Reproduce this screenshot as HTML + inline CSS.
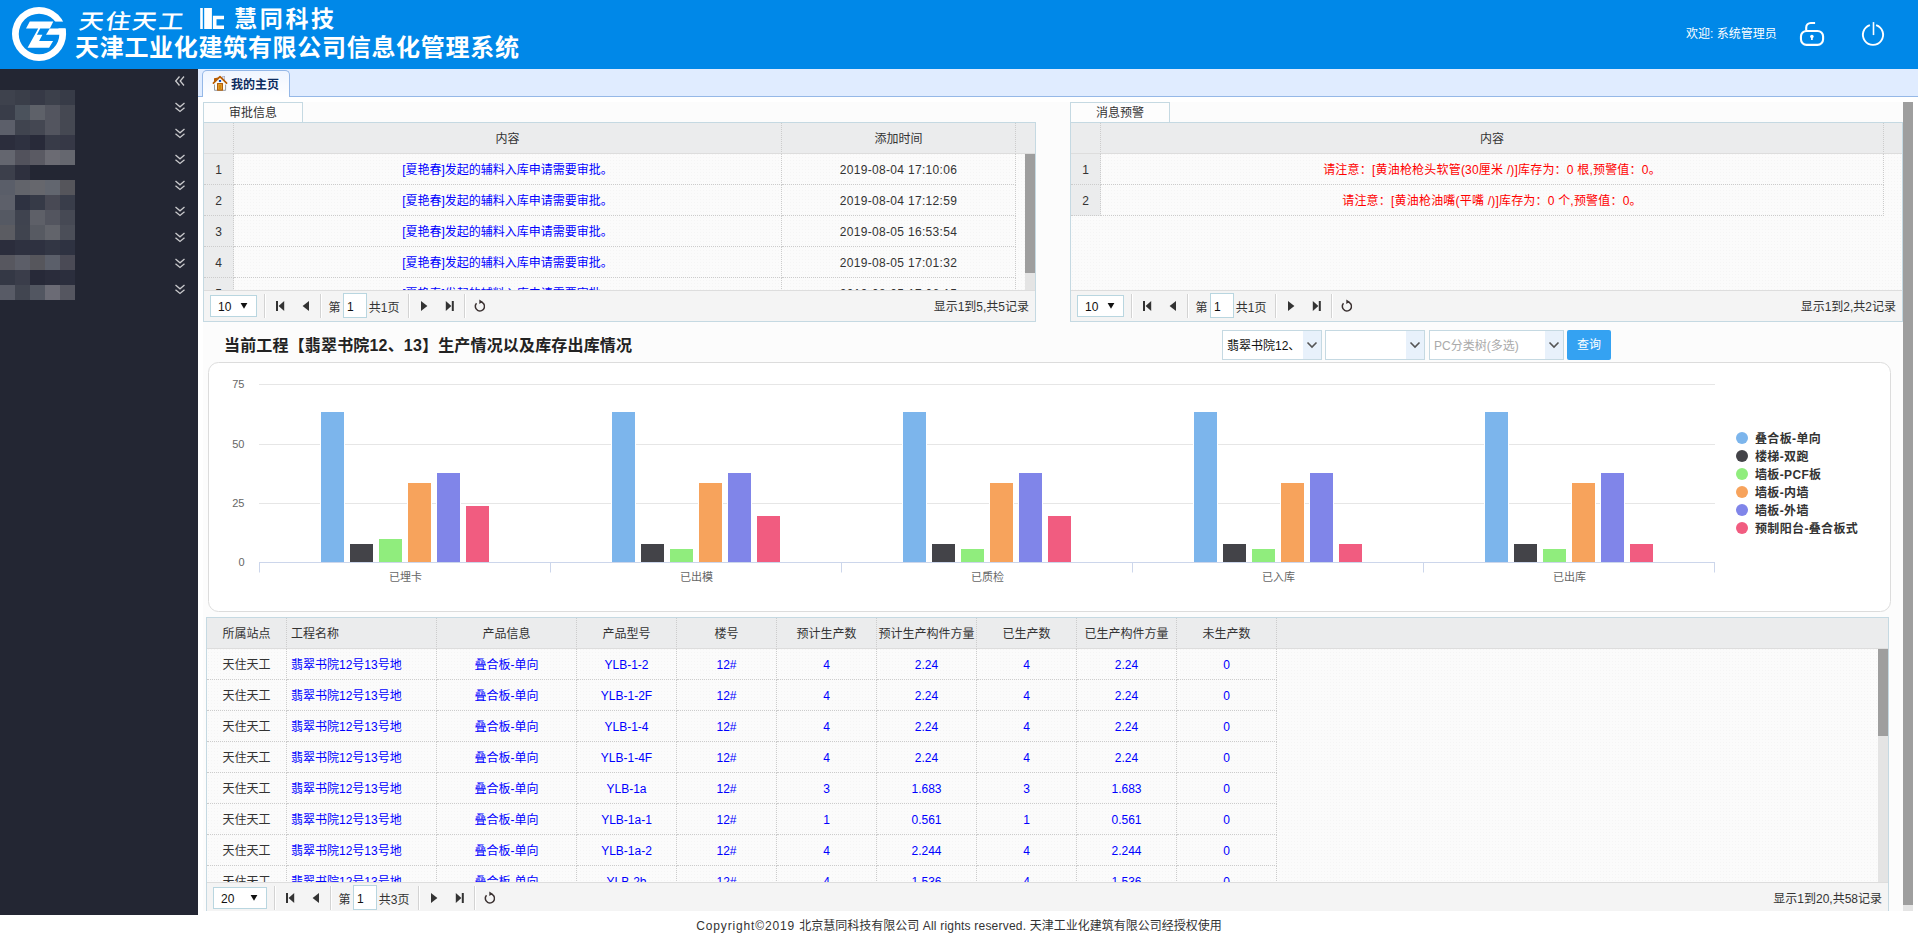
<!DOCTYPE html>
<html lang="zh-CN"><head><meta charset="utf-8"><title>天津工业化建筑有限公司信息化管理系统</title>
<style>
html,body{margin:0;padding:0}
body{width:1918px;height:935px;overflow:hidden;background:#fff;font:12px/1.2 "Liberation Sans","Noto Sans CJK SC",sans-serif;color:#333;position:relative}
#hdr{position:absolute;left:0;top:0;width:1918px;height:69px;background:#0088e8;color:#fff}
#t1{position:absolute;left:79px;top:3.5px;font-size:25px;font-weight:500;letter-spacing:1.6px;white-space:nowrap;transform-origin:0 50%;transform:scaleY(.85) skewX(-7deg);line-height:34px}
#t2{position:absolute;left:234px;top:2px;font-size:23px;font-weight:bold;letter-spacing:2.7px;white-space:nowrap;line-height:34px}
#t3{position:absolute;left:75px;top:30.5px;font-size:24px;font-weight:bold;letter-spacing:.7px;white-space:nowrap;line-height:34px}
#wel{position:absolute;left:1686px;top:26px;font-size:12px;white-space:nowrap;line-height:16px}
#side{position:absolute;left:0;top:69px;width:198px;height:846px;background:#232633}
#tabs{position:absolute;left:198px;top:69px;width:1720px;height:27px;background:#e0ecff;border-bottom:1px solid #95b8e7}
#tab{position:absolute;left:4px;top:1px;width:86px;height:26px;border:1px solid #95b8e7;border-bottom:0;border-radius:5px 5px 0 0;background:linear-gradient(#eff5ff,#fff);color:#0e2d5f;font-weight:bold}
#tab span{position:absolute;left:28px;top:6.5px;white-space:nowrap}
#content{position:absolute;left:198px;top:102px;width:1705px;height:809px;background:#fcfcfc;overflow:hidden}
#vsb{position:absolute;left:1903px;top:102px;width:10px;height:809px;background:#e4e4e4}
#vsb div{width:10px;height:803px;background:#9e9e9e}
.ptitle{position:absolute;height:19px;width:98px;border:1px solid #c5d9e2;border-bottom:0;background:#fdfdfd;text-align:center;line-height:20px;color:#333}
.panel{position:absolute;border:1px solid #c5d9e2;background:#fbfbfb radial-gradient(circle,#f5f5f5 .7px,rgba(245,245,245,0) 1px) 0 0/3px 3px;overflow:hidden}
table.dg{border-collapse:separate;border-spacing:0;table-layout:fixed;position:absolute;left:0;top:0}
table.dg th,table.dg td{padding:2px 0 0;border-right:1px dotted #ccc;border-bottom:1px dotted #ccc;text-align:center;font-weight:normal;white-space:nowrap;overflow:hidden;box-sizing:border-box;height:31px}
table.dg th{background:#ebeced;color:#333;border-bottom:1px solid #ddd}
table.dg td{color:#0000ff}
table.dg td.rn{background:#ebeced;color:#333}
table.dg td.k{color:#333}
table.dg td.dt{color:#333;letter-spacing:.32px}
table.dg td.red{color:#ff0000;letter-spacing:.2px}
.hdbg{position:absolute;left:0;top:0;height:30px;background:#ebeced;border-bottom:1px solid #ddd}
.pager{position:absolute;left:0;height:30px;border-top:1px solid #ddd;background:#f4f4f4}
.psel{position:absolute;left:6px;top:4px;height:20px;border:1px solid #b9d6e0;background:#fff;line-height:23px;padding-left:7px;box-sizing:content-box;color:#111}
.psel .arr{position:absolute;right:8px;top:7px}
.pt{position:absolute;top:9.5px;color:#333;white-space:nowrap}
.pin{position:absolute;top:2px;width:19px;height:23px;border:1px solid #b9d6e0;background:#fff;line-height:26px;padding-left:3px;color:#111}
.pinfo{position:absolute;right:6px;top:8.5px;color:#333;white-space:nowrap}
.isb{position:absolute;width:10px;background:#e4e4e4}
.isb div{width:10px;background:#9e9e9e}
.combo{position:absolute;top:228px;height:30px;border:1px solid #c5d9e2;background:#fff;box-sizing:border-box;line-height:30px;padding-left:4px;color:#111}
.combo .ar{position:absolute;right:0;top:0;width:18px;height:28px;background:#e8f1fb}
.combo .ar svg{position:absolute;left:3px;top:9px}
#qbtn{position:absolute;left:1369px;top:228px;width:44px;height:30px;background:#34a2f2;color:#fff;text-align:center;line-height:31px;border-radius:2px}
#ctitle{position:absolute;left:26px;top:233.5px;letter-spacing:.17px;font-size:16px;font-weight:bold;color:#222;white-space:nowrap}
#foot{position:absolute;left:0;top:918.5px;width:1918px;text-align:center;color:#333;font-size:12px}
</style></head><body>
<div id="hdr">
<svg width="80" height="69" style="position:absolute;left:0;top:0" viewBox="0 0 80 69">
<path fill="#fff" fill-rule="evenodd" d="M39.05 6.9a27.05 27.05 0 1 0 0 54.1a27.05 27.05 0 1 0 0-54.1zM39.05 13.65a20.3 20.3 0 1 1 0 40.6a20.3 20.3 0 1 1 0-40.6z"/>
<rect x="50" y="21.6" width="18" height="6.8" fill="#0088e8"/>
<path fill="#fff" d="M49.8 28.4H65.5L66.1 34.7H46z"/>
<path fill="#fff" d="M29.8 21.6H53.3L49.8 28.4H40.2L36.9 34.7H42.4L39.1 40.9H53.1L49.1 47.8H27.6L38.2 28.4H26z"/>
</svg>
<div id="t1">天住天工</div>
<svg width="26" height="22" style="position:absolute;left:200px;top:7px" viewBox="0 0 26 22"><path fill="#fff" d="M0.2 0.9h2.6v21.1H0.2zM4.2 0.9h7.7v21.1H4.2zM12.9 8.8h11.1v3.5h-7.5v6.1h7.5v3.6H12.9z"/></svg>
<div id="t2">慧同科技</div>
<div id="t3">天津工业化建筑有限公司信息化管理系统</div>
<div id="wel">欢迎: 系统管理员</div>
<svg width="110" height="44" style="position:absolute;left:1790px;top:12px" viewBox="1790 12 110 44" fill="none" stroke="#fff"><rect x="1800.95" y="30.95" width="22.15" height="13.95" rx="5.6" stroke-width="2.1"/><path d="M1806.2 30.5V27.6a4.6 4.6 0 0 1 4.6-4.6H1815.1" stroke-width="2.1"/><circle cx="1811.9" cy="36.6" r="1.75" fill="#fff" stroke="none"/><path d="M1811.9 37v2.9" stroke-width="1.7"/><path d="M1869.9 25.15A10.1 10.1 0 1 0 1876.1 25.15" stroke-width="1.9"/><path d="M1873.5 22.1V35.1" stroke-width="1.6"/></svg>
</div>
<div id="side">
<svg width="198" height="846" style="position:absolute;left:0;top:0">
<rect x="0" y="21" width="15" height="15" fill="#3E424D"/>
<rect x="15" y="21" width="15" height="15" fill="#3A3E49"/>
<rect x="30" y="21" width="15" height="15" fill="#363946"/>
<rect x="45" y="21" width="15" height="15" fill="#3C404B"/>
<rect x="60" y="21" width="15" height="15" fill="#373B47"/>
<rect x="0" y="36" width="15" height="15" fill="#393D49"/>
<rect x="15" y="36" width="15" height="15" fill="#4B525C"/>
<rect x="30" y="36" width="15" height="15" fill="#5E6169"/>
<rect x="45" y="36" width="15" height="15" fill="#53555F"/>
<rect x="60" y="36" width="15" height="15" fill="#454852"/>
<rect x="0" y="51" width="15" height="15" fill="#5C5F6A"/>
<rect x="15" y="51" width="15" height="15" fill="#40444F"/>
<rect x="30" y="51" width="15" height="15" fill="#444752"/>
<rect x="45" y="51" width="15" height="15" fill="#53555F"/>
<rect x="60" y="51" width="15" height="15" fill="#454852"/>
<rect x="0" y="66" width="15" height="15" fill="#2B2D3C"/>
<rect x="15" y="66" width="15" height="15" fill="#2E3140"/>
<rect x="30" y="66" width="15" height="15" fill="#282A39"/>
<rect x="45" y="66" width="15" height="15" fill="#383B48"/>
<rect x="60" y="66" width="15" height="15" fill="#363846"/>
<rect x="0" y="81" width="15" height="15" fill="#64666F"/>
<rect x="15" y="81" width="15" height="15" fill="#52525C"/>
<rect x="30" y="81" width="15" height="15" fill="#5A5A63"/>
<rect x="45" y="81" width="15" height="15" fill="#6B6B73"/>
<rect x="60" y="81" width="15" height="15" fill="#65676F"/>
<rect x="0" y="96" width="15" height="15" fill="#3C3F4B"/>
<rect x="15" y="96" width="15" height="15" fill="#2E303E"/>
<rect x="0" y="111" width="15" height="15" fill="#5A5E69"/>
<rect x="15" y="111" width="15" height="15" fill="#62646B"/>
<rect x="30" y="111" width="15" height="15" fill="#66676D"/>
<rect x="45" y="111" width="15" height="15" fill="#62666F"/>
<rect x="60" y="111" width="15" height="15" fill="#55555B"/>
<rect x="0" y="126" width="15" height="15" fill="#5D606A"/>
<rect x="15" y="126" width="15" height="15" fill="#2E3241"/>
<rect x="30" y="126" width="15" height="15" fill="#363A47"/>
<rect x="45" y="126" width="15" height="15" fill="#484954"/>
<rect x="60" y="126" width="15" height="15" fill="#393D4A"/>
<rect x="0" y="141" width="15" height="15" fill="#555963"/>
<rect x="15" y="141" width="15" height="15" fill="#3F434F"/>
<rect x="30" y="141" width="15" height="15" fill="#5E6068"/>
<rect x="45" y="141" width="15" height="15" fill="#53555F"/>
<rect x="60" y="141" width="15" height="15" fill="#464954"/>
<rect x="0" y="156" width="15" height="15" fill="#5B5C62"/>
<rect x="15" y="156" width="15" height="15" fill="#40444F"/>
<rect x="30" y="156" width="15" height="15" fill="#575A62"/>
<rect x="45" y="156" width="15" height="15" fill="#62646B"/>
<rect x="60" y="156" width="15" height="15" fill="#4B4E58"/>
<rect x="0" y="171" width="15" height="15" fill="#2B2D3C"/>
<rect x="15" y="171" width="15" height="15" fill="#2E3140"/>
<rect x="30" y="171" width="15" height="15" fill="#2E3140"/>
<rect x="45" y="171" width="15" height="15" fill="#323644"/>
<rect x="60" y="171" width="15" height="15" fill="#2E3241"/>
<rect x="0" y="186" width="15" height="15" fill="#57575F"/>
<rect x="15" y="186" width="15" height="15" fill="#5C5E68"/>
<rect x="30" y="186" width="15" height="15" fill="#56565C"/>
<rect x="45" y="186" width="15" height="15" fill="#5B5F6A"/>
<rect x="60" y="186" width="15" height="15" fill="#4A4A55"/>
<rect x="0" y="201" width="15" height="15" fill="#343845"/>
<rect x="15" y="201" width="15" height="15" fill="#3A3D4A"/>
<rect x="30" y="201" width="15" height="15" fill="#272938"/>
<rect x="45" y="201" width="15" height="15" fill="#2A2C3B"/>
<rect x="60" y="201" width="15" height="15" fill="#2B2E3D"/>
<rect x="0" y="216" width="15" height="15" fill="#585B66"/>
<rect x="15" y="216" width="15" height="15" fill="#414550"/>
<rect x="30" y="216" width="15" height="15" fill="#525661"/>
<rect x="45" y="216" width="15" height="15" fill="#6B6B75"/>
<rect x="60" y="216" width="15" height="15" fill="#555660"/>
<g fill="none" stroke="#c9c9cc" stroke-width="1.3">
<path d="M179.5 7.5 L175.7 12 L179.5 16.5 M184 7.5 L180.2 12 L184 16.5"/>
<path d="M175.5 34 L180 37.8 L184.5 34 M175.5 38.7 L180 42.5 L184.5 38.7"/>
<path d="M175.5 60 L180 63.8 L184.5 60 M175.5 64.7 L180 68.5 L184.5 64.7"/>
<path d="M175.5 86 L180 89.8 L184.5 86 M175.5 90.7 L180 94.5 L184.5 90.7"/>
<path d="M175.5 112 L180 115.8 L184.5 112 M175.5 116.7 L180 120.5 L184.5 116.7"/>
<path d="M175.5 138 L180 141.8 L184.5 138 M175.5 142.7 L180 146.5 L184.5 142.7"/>
<path d="M175.5 164 L180 167.8 L184.5 164 M175.5 168.7 L180 172.5 L184.5 168.7"/>
<path d="M175.5 190 L180 193.8 L184.5 190 M175.5 194.7 L180 198.5 L184.5 194.7"/>
<path d="M175.5 216 L180 219.8 L184.5 216 M175.5 220.7 L180 224.5 L184.5 220.7"/>
</g></svg></div>
<div id="tabs"><div id="tab">
<svg width="24" height="22" viewBox="208 72 24 22" style="position:absolute;left:5px;top:1px"><rect x="222.7" y="76.3" width="2" height="3.4" fill="#dfe2ee" stroke="#9aa0bb" stroke-width=".6"/><path d="M214.5 83L220 77.4L225.6 83V90.3H214.5z" fill="#fbfbf6"/><path d="M214.5 84.5V90.3H225.6V84.5" fill="none" stroke="#8a8f96" stroke-width=".9"/><path d="M214 78.2L218.4 77.4L214 82.3z" fill="#b85c00"/><path d="M213.4 83.2L220 76.7L226.6 83.2" fill="none" stroke="#b85c00" stroke-width="1.7" stroke-linecap="round" stroke-linejoin="round"/><rect x="217.6" y="83.6" width="4.8" height="6.5" fill="#eaa33a" stroke="#b05a00" stroke-width="1.1"/><rect x="219.1" y="85" width="1.8" height="4.4" fill="#d08a00"/><rect x="218.9" y="80" width="2.2" height="1.9" fill="#0a44c4"/></svg>
<span>我的主页</span></div></div>
<div id="content">
<div style="position:absolute;left:0;top:0;width:5px;height:809px;background:#fff"></div>
<!-- left panel -->
<div class="ptitle" style="left:5px;top:0">审批信息</div>
<div class="panel" style="left:5px;top:20px;width:831px;height:198px">
<div class="hdbg" style="width:831px"></div>
<table class="dg"><colgroup><col style="width:30px"><col style="width:548px"><col style="width:234px"></colgroup>
<tr class="hd"><th></th><th>内容</th><th>添加时间</th></tr>
<tr><td class="rn">1</td><td>[夏艳春]发起的辅料入库申请需要审批。</td><td class="dt">2019-08-04 17:10:06</td></tr>
<tr><td class="rn">2</td><td>[夏艳春]发起的辅料入库申请需要审批。</td><td class="dt">2019-08-04 17:12:59</td></tr>
<tr><td class="rn">3</td><td>[夏艳春]发起的辅料入库申请需要审批。</td><td class="dt">2019-08-05 16:53:54</td></tr>
<tr><td class="rn">4</td><td>[夏艳春]发起的辅料入库申请需要审批。</td><td class="dt">2019-08-05 17:01:32</td></tr>
<tr><td class="rn">5</td><td>[夏艳春]发起的辅料入库申请需要审批。</td><td class="dt">2019-08-05 17:06:15</td></tr>
</table>
<div class="isb" style="left:821px;top:31px;height:136px"><div style="height:119px"></div></div>
<div class="pager" style="top:167px;width:831px">
<div class="psel" style="width:38px">10<svg class="arr" width="8" height="6" viewBox="0 0 8 6"><path d="M0.6 0h6.8L4 5.8z" fill="#111"/></svg></div>
<svg width="300" height="30" style="position:absolute;left:0;top:0" fill="#333"><path d="M60.5 3V27" stroke="#d3d3d3"/><path d="M61.5 3V27" stroke="#fff"/><path d="M116.5 3V27" stroke="#d3d3d3"/><path d="M117.5 3V27" stroke="#fff"/><path d="M204.5 3V27" stroke="#d3d3d3"/><path d="M205.5 3V27" stroke="#fff"/><path d="M260.5 3V27" stroke="#d3d3d3"/><path d="M261.5 3V27" stroke="#fff"/><path d="M72 10h2v10h-2zM74.6 15l5.6-5v10z"/><path d="M98.6 15l6.4-5v10z"/><path d="M223.4 15l-6.4-5v10z"/><path d="M247.4 15l-5.6-5v10zM247.8 10h2v10h-2z"/><path d="M276.2 10.8A4.6 4.6 0 1 1 272.5 12.3" fill="none" stroke="#3a3030" stroke-width="1.5"/><path d="M275.29999999999995 8.5l3.4 2.2-3.4 2.3z" fill="#3a3030"/></svg>
<span class="pt" style="left:124.5px">第</span><div class="pin" style="left:139px">1</div><span class="pt" style="left:164.8px">共1页</span>
<span class="pinfo">显示1到5,共5记录</span>
</div>
</div>
<!-- right panel -->
<div class="ptitle" style="left:872px;top:0">消息预警</div>
<div class="panel" style="left:872px;top:20px;width:831px;height:198px">
<div class="hdbg" style="width:831px"></div>
<table class="dg"><colgroup><col style="width:30px"><col style="width:783px"></colgroup>
<tr class="hd"><th></th><th>内容</th></tr>
<tr><td class="rn">1</td><td class="red">请注意：[黄油枪枪头软管(30厘米 /)]库存为：0 根,预警值：0。</td></tr>
<tr><td class="rn">2</td><td class="red">请注意：[黄油枪油嘴(平嘴 /)]库存为：0 个,预警值：0。</td></tr>
</table>
<div class="pager" style="top:167px;width:831px">
<div class="psel" style="width:38px">10<svg class="arr" width="8" height="6" viewBox="0 0 8 6"><path d="M0.6 0h6.8L4 5.8z" fill="#111"/></svg></div>
<svg width="300" height="30" style="position:absolute;left:0;top:0" fill="#333"><path d="M60.5 3V27" stroke="#d3d3d3"/><path d="M61.5 3V27" stroke="#fff"/><path d="M116.5 3V27" stroke="#d3d3d3"/><path d="M117.5 3V27" stroke="#fff"/><path d="M204.5 3V27" stroke="#d3d3d3"/><path d="M205.5 3V27" stroke="#fff"/><path d="M260.5 3V27" stroke="#d3d3d3"/><path d="M261.5 3V27" stroke="#fff"/><path d="M72 10h2v10h-2zM74.6 15l5.6-5v10z"/><path d="M98.6 15l6.4-5v10z"/><path d="M223.4 15l-6.4-5v10z"/><path d="M247.4 15l-5.6-5v10zM247.8 10h2v10h-2z"/><path d="M276.2 10.8A4.6 4.6 0 1 1 272.5 12.3" fill="none" stroke="#3a3030" stroke-width="1.5"/><path d="M275.29999999999995 8.5l3.4 2.2-3.4 2.3z" fill="#3a3030"/></svg>
<span class="pt" style="left:124.5px">第</span><div class="pin" style="left:139px">1</div><span class="pt" style="left:164.8px">共1页</span>
<span class="pinfo">显示1到2,共2记录</span>
</div>
</div>
<div id="ctitle">当前工程【翡翠书院12、13】生产情况以及库存出库情况</div>
<div class="combo" style="left:1024px;width:100px">翡翠书院12、<div class="ar"><svg width="12" height="10" viewBox="0 0 12 10"><path d="M1.5 2.5L6 7l4.5-4.5" fill="none" stroke="#555" stroke-width="1.6"/></svg></div></div>
<div class="combo" style="left:1127px;width:100px"><div class="ar"><svg width="12" height="10" viewBox="0 0 12 10"><path d="M1.5 2.5L6 7l4.5-4.5" fill="none" stroke="#555" stroke-width="1.6"/></svg></div></div>
<div class="combo" style="left:1231px;width:135px;color:#aaa">PC分类树(多选)<div class="ar"><svg width="12" height="10" viewBox="0 0 12 10"><path d="M1.5 2.5L6 7l4.5-4.5" fill="none" stroke="#555" stroke-width="1.6"/></svg></div></div>
<div id="qbtn">查询</div>
<svg id="chart" width="1683" height="250" viewBox="208 362 1683 250" style="position:absolute;left:10px;top:260px">
<rect x="208.5" y="362.5" width="1682" height="249" rx="10" ry="10" fill="#fff" stroke="#dcdcdc"/>
<path d="M259.0 503.5H1715.0" stroke="#e6e6e6"/>
<path d="M259.0 444.5H1715.0" stroke="#e6e6e6"/>
<path d="M259.0 384.5H1715.0" stroke="#e6e6e6"/>
<path d="M259.5 562.5V572.5" stroke="#ccd6eb"/>
<path d="M550.5 562.5V572.5" stroke="#ccd6eb"/>
<path d="M841.5 562.5V572.5" stroke="#ccd6eb"/>
<path d="M1132.5 562.5V572.5" stroke="#ccd6eb"/>
<path d="M1423.5 562.5V572.5" stroke="#ccd6eb"/>
<path d="M1714.5 562.5V572.5" stroke="#ccd6eb"/>
<g font-size="11" fill="#666" text-anchor="end">
<text x="244.5" y="566.1">0</text>
<text x="244.5" y="507.1">25</text>
<text x="244.5" y="448.1">50</text>
<text x="244.5" y="388.1">75</text>
</g>
<g font-size="11" fill="#666" text-anchor="middle">
<text x="405.5" y="581">已埋卡</text>
<text x="696.5" y="581">已出模</text>
<text x="987.5" y="581">已质检</text>
<text x="1278.5" y="581">已入库</text>
<text x="1569.5" y="581">已出库</text>
</g>
<g stroke="#fff" stroke-width="1">
<rect x="320.5" y="411.5" width="24" height="151.0" fill="#7CB5EC"/>
<rect x="349.5" y="543.5" width="24" height="19.0" fill="#434348"/>
<rect x="378.5" y="538.5" width="24" height="24.0" fill="#90ED7D"/>
<rect x="407.5" y="482.5" width="24" height="80.0" fill="#F7A35C"/>
<rect x="436.5" y="472.5" width="24" height="90.0" fill="#8085E9"/>
<rect x="465.5" y="505.5" width="24" height="57.0" fill="#F15C80"/>
<rect x="611.5" y="411.5" width="24" height="151.0" fill="#7CB5EC"/>
<rect x="640.5" y="543.5" width="24" height="19.0" fill="#434348"/>
<rect x="669.5" y="548.5" width="24" height="14.0" fill="#90ED7D"/>
<rect x="698.5" y="482.5" width="24" height="80.0" fill="#F7A35C"/>
<rect x="727.5" y="472.5" width="24" height="90.0" fill="#8085E9"/>
<rect x="756.5" y="515.5" width="24" height="47.0" fill="#F15C80"/>
<rect x="902.5" y="411.5" width="24" height="151.0" fill="#7CB5EC"/>
<rect x="931.5" y="543.5" width="24" height="19.0" fill="#434348"/>
<rect x="960.5" y="548.5" width="24" height="14.0" fill="#90ED7D"/>
<rect x="989.5" y="482.5" width="24" height="80.0" fill="#F7A35C"/>
<rect x="1018.5" y="472.5" width="24" height="90.0" fill="#8085E9"/>
<rect x="1047.5" y="515.5" width="24" height="47.0" fill="#F15C80"/>
<rect x="1193.5" y="411.5" width="24" height="151.0" fill="#7CB5EC"/>
<rect x="1222.5" y="543.5" width="24" height="19.0" fill="#434348"/>
<rect x="1251.5" y="548.5" width="24" height="14.0" fill="#90ED7D"/>
<rect x="1280.5" y="482.5" width="24" height="80.0" fill="#F7A35C"/>
<rect x="1309.5" y="472.5" width="24" height="90.0" fill="#8085E9"/>
<rect x="1338.5" y="543.5" width="24" height="19.0" fill="#F15C80"/>
<rect x="1484.5" y="411.5" width="24" height="151.0" fill="#7CB5EC"/>
<rect x="1513.5" y="543.5" width="24" height="19.0" fill="#434348"/>
<rect x="1542.5" y="548.5" width="24" height="14.0" fill="#90ED7D"/>
<rect x="1571.5" y="482.5" width="24" height="80.0" fill="#F7A35C"/>
<rect x="1600.5" y="472.5" width="24" height="90.0" fill="#8085E9"/>
<rect x="1629.5" y="543.5" width="24" height="19.0" fill="#F15C80"/>
</g>
<path d="M259.0 562.5H1715.0" stroke="#ccd6eb"/>
<g font-size="12" font-weight="bold" fill="#333" letter-spacing=".35">
<circle cx="1742" cy="438.0" r="6" fill="#7CB5EC"/><text x="1755" y="442.9">叠合板-单向</text>
<circle cx="1742" cy="456.0" r="6" fill="#434348"/><text x="1755" y="460.9">楼梯-双跑</text>
<circle cx="1742" cy="474.0" r="6" fill="#90ED7D"/><text x="1755" y="478.9">墙板-PCF板</text>
<circle cx="1742" cy="492.0" r="6" fill="#F7A35C"/><text x="1755" y="496.9">墙板-内墙</text>
<circle cx="1742" cy="510.0" r="6" fill="#8085E9"/><text x="1755" y="514.9">墙板-外墙</text>
<circle cx="1742" cy="528.0" r="6" fill="#F15C80"/><text x="1755" y="532.9">预制阳台-叠合板式</text>
</g></svg>
<!-- bottom grid -->
<div class="panel" style="left:8px;top:515px;width:1681px;height:293px;border-bottom:0">
<div class="hdbg" style="width:1681px"></div>
<table class="dg g3"><colgroup><col style="width:80px"><col style="width:150px"><col style="width:140px"><col style="width:100px"><col style="width:100px"><col style="width:100px"><col style="width:100px"><col style="width:100px"><col style="width:100px"><col style="width:100px"></colgroup>
<tr class="hd"><th>所属站点</th><th style="text-align:left;padding-left:4px">工程名称</th><th>产品信息</th><th>产品型号</th><th>楼号</th><th>预计生产数</th><th>预计生产构件方量</th><th>已生产数</th><th>已生产构件方量</th><th>未生产数</th></tr>
<tr><td class="k">天住天工</td><td style="text-align:left;padding-left:4px">翡翠书院12号13号地</td><td>叠合板-单向</td><td>YLB-1-2</td><td>12#</td><td>4</td><td>2.24</td><td>4</td><td>2.24</td><td>0</td></tr>
<tr><td class="k">天住天工</td><td style="text-align:left;padding-left:4px">翡翠书院12号13号地</td><td>叠合板-单向</td><td>YLB-1-2F</td><td>12#</td><td>4</td><td>2.24</td><td>4</td><td>2.24</td><td>0</td></tr>
<tr><td class="k">天住天工</td><td style="text-align:left;padding-left:4px">翡翠书院12号13号地</td><td>叠合板-单向</td><td>YLB-1-4</td><td>12#</td><td>4</td><td>2.24</td><td>4</td><td>2.24</td><td>0</td></tr>
<tr><td class="k">天住天工</td><td style="text-align:left;padding-left:4px">翡翠书院12号13号地</td><td>叠合板-单向</td><td>YLB-1-4F</td><td>12#</td><td>4</td><td>2.24</td><td>4</td><td>2.24</td><td>0</td></tr>
<tr><td class="k">天住天工</td><td style="text-align:left;padding-left:4px">翡翠书院12号13号地</td><td>叠合板-单向</td><td>YLB-1a</td><td>12#</td><td>3</td><td>1.683</td><td>3</td><td>1.683</td><td>0</td></tr>
<tr><td class="k">天住天工</td><td style="text-align:left;padding-left:4px">翡翠书院12号13号地</td><td>叠合板-单向</td><td>YLB-1a-1</td><td>12#</td><td>1</td><td>0.561</td><td>1</td><td>0.561</td><td>0</td></tr>
<tr><td class="k">天住天工</td><td style="text-align:left;padding-left:4px">翡翠书院12号13号地</td><td>叠合板-单向</td><td>YLB-1a-2</td><td>12#</td><td>4</td><td>2.244</td><td>4</td><td>2.244</td><td>0</td></tr>
<tr><td class="k">天住天工</td><td style="text-align:left;padding-left:4px">翡翠书院12号13号地</td><td>叠合板-单向</td><td>YLB-2b</td><td>12#</td><td>4</td><td>1.536</td><td>4</td><td>1.536</td><td>0</td></tr>
</table>
<div class="isb" style="left:1671px;top:31px;height:233px"><div style="height:87px"></div></div>
<div class="pager" style="top:264px;width:1681px">
<div class="psel" style="width:45px">20<svg class="arr" width="8" height="6" viewBox="0 0 8 6"><path d="M0.6 0h6.8L4 5.8z" fill="#111"/></svg></div>
<svg width="307" height="30" style="position:absolute;left:0;top:0" fill="#333"><path d="M67.5 3V27" stroke="#d3d3d3"/><path d="M68.5 3V27" stroke="#fff"/><path d="M123.5 3V27" stroke="#d3d3d3"/><path d="M124.5 3V27" stroke="#fff"/><path d="M211.5 3V27" stroke="#d3d3d3"/><path d="M212.5 3V27" stroke="#fff"/><path d="M267.5 3V27" stroke="#d3d3d3"/><path d="M268.5 3V27" stroke="#fff"/><path d="M79 10h2v10h-2zM81.6 15l5.6-5v10z"/><path d="M105.6 15l6.4-5v10z"/><path d="M230.4 15l-6.4-5v10z"/><path d="M254.4 15l-5.6-5v10zM254.8 10h2v10h-2z"/><path d="M283.2 10.8A4.6 4.6 0 1 1 279.5 12.3" fill="none" stroke="#3a3030" stroke-width="1.5"/><path d="M282.29999999999995 8.5l3.4 2.2-3.4 2.3z" fill="#3a3030"/></svg>
<span class="pt" style="left:131.5px">第</span><div class="pin" style="left:146px">1</div><span class="pt" style="left:171.8px">共3页</span>
<span class="pinfo">显示1到20,共58记录</span>
</div>
</div>
</div>
<div id="vsb"><div></div></div>
<div id="foot"><span style="letter-spacing:.85px">Copyright©2019 </span>北京慧同科技有限公司<span style="letter-spacing:.2px"> All rights reserved. </span>天津工业化建筑有限公司经授权使用</div>
</body></html>
